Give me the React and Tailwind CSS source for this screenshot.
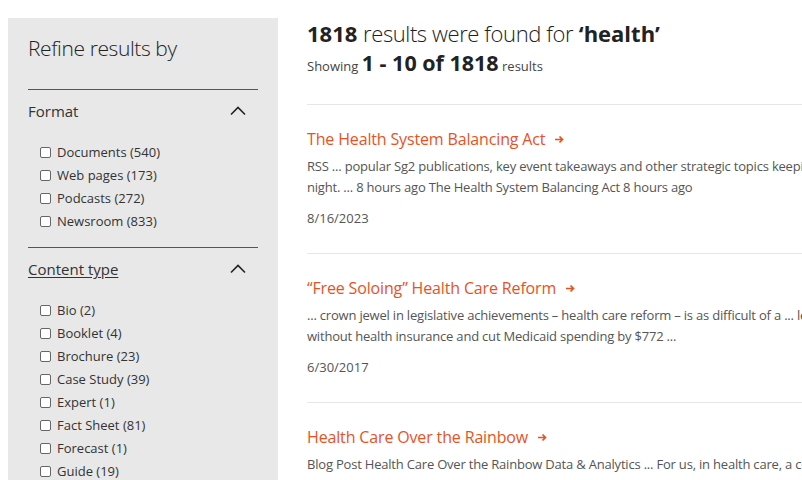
import React from "react";

const formats = [
  ["Documents", 540],
  ["Web pages", 173],
  ["Podcasts", 272],
  ["Newsroom", 833],
];

const contentTypes = [
  ["Bio", 2],
  ["Booklet", 4],
  ["Brochure", 23],
  ["Case Study", 39],
  ["Expert", 1],
  ["Fact Sheet", 81],
  ["Forecast", 1],
  ["Guide", 19],
];

const results = [
  {
    title: "The Health System Balancing Act",
    lines: [
      "RSS ... popular Sg2 publications, key event takeaways and other strategic topics keeping health care leaders up at",
      "night. ... 8 hours ago The Health System Balancing Act 8 hours ago",
    ],
    date: "8/16/2023",
  },
  {
    title: "\u201cFree Soloing\u201d Health Care Reform",
    lines: [
      "... crown jewel in legislative achievements \u2013 health care reform \u2013 is as difficult of a ... leave millions more",
      "without health insurance and cut Medicaid spending by $772 ...",
    ],
    date: "6/30/2017",
  },
  {
    title: "Health Care Over the Rainbow",
    lines: [
      "Blog Post Health Care Over the Rainbow Data & Analytics ... For us, in health care, a common refrain is",
      "the data we need to make better decisions ...",
    ],
    date: "5/12/2021",
  },
];

const Chevron = () => (
  <svg width="16" height="10" viewBox="0 0 16 10" fill="none">
    <path d="M1 8.5 L8 1.5 L15 8.5" stroke="#222" strokeWidth="1.6" />
  </svg>
);

const Arrow = () => (
  <svg width="10" height="9" viewBox="0 0 10 9" fill="none">
    <path d="M1 4.5 H8.5 M5.5 1.5 L8.5 4.5 L5.5 7.5" stroke="#e8521f" strokeWidth="1.7" />
  </svg>
);

const FilterGroup = ({ label, items, underline }) => (
  <div className="border-t border-[#555]">
    <div className="flex items-center justify-between h-[42px] pr-[12px]">
      <span className={`text-[15px] text-[#333] ${underline ? "underline underline-offset-2" : ""}`}>
        {label}
      </span>
      <Chevron />
    </div>
    <ul className="pt-[9px] pb-[14px] pl-[12px] flex flex-col">
      {items.map(([name, count]) => (
        <li key={name} className="flex items-center gap-[6px] h-[23px] text-[13px] text-[#333]">
          <span className="w-[11px] h-[11px] border border-[#666] rounded-[2px] bg-white" />
          {name} ({count})
        </li>
      ))}
    </ul>
  </div>
);

export default function App() {
  return (
    <div
      className="w-[802px] h-[480px] overflow-hidden bg-white flex"
      style={{ fontFamily: "'Open Sans', 'Noto Sans', sans-serif" }}
    >
      {/* Sidebar */}
      <aside className="w-[270px] shrink-0 ml-[8px] mt-[18px] bg-[#e8e8e8] px-[20px]">
        <h2 className="text-[21px] font-light tracking-[-0.4px] text-[#222] leading-[28px] pt-[16px] pb-[27px]">
          Refine results by
        </h2>
        <FilterGroup label="Format" items={formats} />
        <FilterGroup label="Content type" items={contentTypes} underline />
      </aside>

      {/* Results */}
      <main className="ml-[29px] w-[620px] shrink-0">
        <h1 className="text-[22px] leading-[30px] text-[#222] pt-[18px]">
          <span className="font-bold">1818</span>{" "}
          <span className="font-light tracking-[-0.4px]">results were found for</span>{" "}
          <span className="font-bold">{"\u2018health\u2019"}</span>
        </h1>
        <p className="mt-[2px] text-[13px] text-[#444] leading-[26px]">
          Showing{" "}
          <span className="text-[21.5px] font-bold text-[#222]">1 - 10 of 1818</span>{" "}
          results
        </p>
        <div className="mt-[25px]">
          {results.map((r) => (
            <div key={r.title} className="border-t border-[#e6e6e6] pt-[23px] pb-[24px]">
              <a className="flex items-center gap-[9px] text-[16px] tracking-[-0.15px] leading-[22px] text-[#e8521f]">
                {r.title}
                <Arrow />
              </a>
              <div className="mt-[6px] text-[13px] tracking-[-0.2px] leading-[21px] text-[#555] whitespace-nowrap">
                {r.lines.map((l) => (
                  <p key={l}>{l}</p>
                ))}
              </div>
              <p className="mt-[10px] text-[13px] leading-[21px] text-[#555]">{r.date}</p>
            </div>
          ))}
        </div>
      </main>
    </div>
  );
}
